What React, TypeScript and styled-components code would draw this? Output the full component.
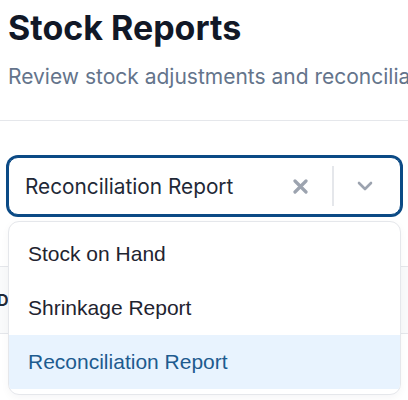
import React from "react";
import styled, { createGlobalStyle } from "styled-components";

const Global = createGlobalStyle`
  html, body { margin: 0; padding: 0; background: #ffffff; overflow: hidden; }
  body { width: 408px; height: 400px; font-family: Inter, "Noto Sans", sans-serif; }
  * { box-sizing: border-box; }
`;

const Page = styled.div`
  width: 408px;
  height: 400px;
  overflow: hidden;
  background: #fff;
`;

const Header = styled.header`
  padding: 8px 8px 30px 8px;
  border-bottom: 1px solid #e5e7eb;
`;

const Title = styled.h1`
  margin: 0;
  font-family: Inter, sans-serif;
  font-size: 34px;
  line-height: 40px;
  font-weight: 700;
  color: #111827;
`;

const Subtitle = styled.p`
  margin: 14px 0 0 0;
  height: 28px;
  font-family: Inter, sans-serif;
  font-size: 21px;
  line-height: 29px;
  color: #64748b;
  white-space: nowrap;
`;

const FilterArea = styled.div`
  padding: 36px 7px 0 8px;
  position: relative;
  z-index: 2;
`;

const Control = styled.div`
  position: relative;
  height: 58px;
  display: flex;
  align-items: center;
  border: 1px solid #0b4a85;
  box-shadow: 0 0 0 2px #0b4a85;
  border-radius: 10px;
  background: #fff;
`;

const Value = styled.div`
  flex: 1;
  padding-left: 16px;
  font-family: Inter, sans-serif;
  font-size: 20.8px;
  color: #1f2937;
  white-space: nowrap;
`;

const IconButton = styled.span<{ $w: number; $shift?: number }>`
  display: flex;
  align-items: center;
  justify-content: center;
  width: ${(p) => p.$w}px;
  padding-right: ${(p) => p.$shift ?? 0}px;
  height: 100%;
  color: #9ca3af;
`;

const Separator = styled.span`
  width: 2px;
  align-self: stretch;
  margin: 8px 0;
  background: #e5e7eb;
`;

const Menu = styled.ul`
  position: absolute;
  left: 8px;
  right: 7px;
  top: calc(100% + 6px);
  margin: 0;
  padding: 5px 0;
  list-style: none;
  background: #fff;
  border: 1px solid #e5e7eb;
  border-radius: 11px;
  box-shadow: 0 3px 8px rgba(15, 23, 42, 0.04);
  overflow: hidden;
`;

const Option = styled.li<{ $active?: boolean }>`
  height: 54px;
  display: flex;
  align-items: center;
  padding-left: 19px;
  font-family: "Liberation Sans", Arial, sans-serif;
  font-size: 21px;
  color: ${(p) => (p.$active ? "#1d5b8f" : "#1f2430")};
  background: ${(p) => (p.$active ? "#e8f3fe" : "transparent")};
`;

const TableWrap = styled.div`
  margin-top: 51px;
  margin-left: -11px;
`;

const HeadRow = styled.div`
  display: flex;
  height: 68px;
  align-items: center;
  background: #f9fafb;
  border-top: 1px solid #e5e7eb;
  border-bottom: 1px solid #e5e7eb;
`;

const HeadCell = styled.div`
  padding-left: 8px;
  width: 140px;
  font-family: Inter, sans-serif;
  font-size: 16px;
  font-weight: 700;
  color: #1f2937;
`;

export default function App() {
  return (
    <Page>
      <Global />
      <Header>
        <Title>Stock Reports</Title>
        <Subtitle>Review stock adjustments and reconciliation reports</Subtitle>
      </Header>
      <FilterArea>
        <Control>
          <Value>Reconciliation Report</Value>
          <IconButton $w={64}>
            <svg width="15" height="15" viewBox="0 0 15 15" fill="none">
              <path d="M2 2 L13 13 M13 2 L2 13" stroke="currentColor" strokeWidth="3.2" strokeLinecap="round" />
            </svg>
          </IconButton>
          <Separator />
          <IconButton $w={66} $shift={4}>
            <svg width="16" height="10" viewBox="0 0 16 10" fill="none">
              <path d="M2 2 L8 8 L14 2" stroke="currentColor" strokeWidth="2.6" strokeLinecap="round" strokeLinejoin="round" />
            </svg>
          </IconButton>
        </Control>
        <Menu>
          <Option>Stock on Hand</Option>
          <Option>Shrinkage Report</Option>
          <Option $active>Reconciliation Report</Option>
        </Menu>
      </FilterArea>
      <TableWrap>
        <HeadRow>
          <HeadCell>Date</HeadCell>
          <HeadCell>Type</HeadCell>
          <HeadCell>Status</HeadCell>
        </HeadRow>
      </TableWrap>
    </Page>
  );
}
